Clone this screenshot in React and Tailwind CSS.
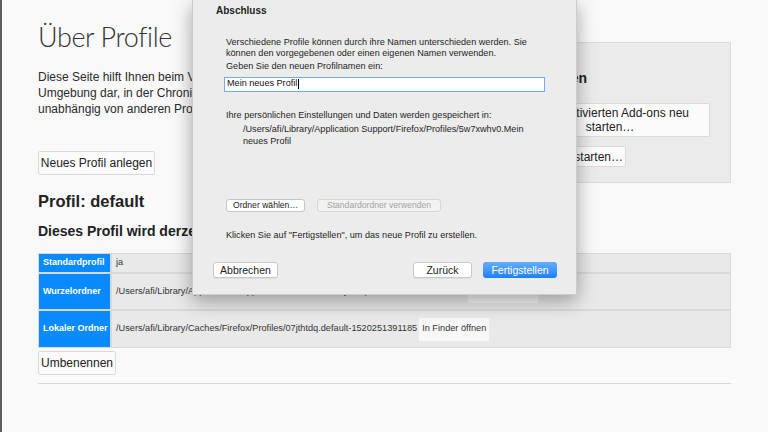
import React from 'react';

function PageButton({ children, className = '' }) {
    return (
        <button className={`rounded-[2px] border border-[#dadada] bg-[#fbfbfb] text-[#222] ${className}`}>
            {children}
        </button>
    );
}

function Row({ label, children, h }) {
    return (
        <>
            <div className={`flex items-center bg-[#0a8aff] pl-[4px] text-[9px] font-bold text-white ${h}`}>
                {label}
            </div>
            <div className={`flex items-center bg-[#e9e9e9] pl-[4px] text-[9.2px] text-[#333] whitespace-nowrap overflow-hidden ${h}`}>
                {children}
            </div>
        </>
    );
}

function FinderButton() {
    return (
        <button className="ml-[2px] h-[23px] shrink-0 rounded-[1px] bg-[#f8f8f8] px-[3px] text-[9.2px] text-[#333]">
            In Finder öffnen
        </button>
    );
}

function WizardDialog() {
    return (
        <div className="absolute left-[190px] top-0 h-[295px] w-[385px] border-x border-b border-[#cdcdcd] bg-[#ececec] text-[#1e1e1e] shadow-[0_6px_18px_rgba(0,0,0,0.35)]">
            <div className="pl-[23px] pt-[5px] text-[10px] font-bold leading-[12px]">Abschluss</div>

            <div className="pl-[33px] pr-[20px] text-[9.1px] leading-[10.5px]">
                <p className="mt-[20px]">
                    Verschiedene Profile können durch ihre Namen unterschieden werden. Sie
                    <br />
                    können den vorgegebenen oder einen eigenen Namen verwenden.
                </p>
                <p className="mt-[3px]">Geben Sie den neuen Profilnamen ein:</p>
            </div>

            <div className="ml-[31px] mt-[5px] flex h-[15px] w-[321px] items-center border-[1.5px] border-[#74a9ee] bg-white pl-[2px] text-[9.1px] text-[#111]">
                Mein neues Profil
                <span className="ml-[1px] inline-block h-[10px] w-px bg-black" />
            </div>

            <div className="pl-[33px] text-[9.1px]">
                <p className="mt-[18px] leading-[10.5px]">Ihre persönlichen Einstellungen und Daten werden gespeichert in:</p>
                <p className="ml-[17px] mt-[3px] leading-[12px]">
                    /Users/afi/Library/Application Support/Firefox/Profiles/5w7xwhv0.Mein
                    <br />
                    neues Profil
                </p>

                <div className="mt-[52px] flex gap-[12px]">
                    <button className="h-[13px] w-[79px] rounded-[3px] border border-[#c6c6c6] bg-white text-[8.6px] leading-[11px] text-[#222]">
                        Ordner wählen…
                    </button>
                    <button className="h-[13px] w-[124px] rounded-[3px] border border-[#d6d6d6] bg-[#f2f2f2] text-[8.6px] leading-[11px] text-[#a3a3a3]">
                        Standardordner verwenden
                    </button>
                </div>

                <p className="mt-[18px] leading-[10px]">
                    Klicken Sie auf "Fertigstellen", um das neue Profil zu erstellen.
                </p>
            </div>

            <div className="mt-[22px] flex items-center pl-[20px] pr-[19px] text-[10.5px]">
                <button className="h-[16px] w-[65px] rounded-[3px] border border-[#c8c8c8] bg-white leading-[14px] text-[#222] shadow-[0_1px_0_rgba(0,0,0,0.06)]">
                    Abbrechen
                </button>
                <div className="flex-1" />
                <button className="h-[16px] w-[59px] rounded-[3px] border border-[#c8c8c8] bg-white leading-[14px] text-[#222] shadow-[0_1px_0_rgba(0,0,0,0.06)]">
                    Zurück
                </button>
                <button className="ml-[11px] h-[16px] w-[74px] rounded-[3px] bg-gradient-to-b from-[#62aefd] to-[#1c80f7] leading-[16px] font-medium text-white">
                    Fertigstellen
                </button>
            </div>
        </div>
    );
}

export default function App() {
    return (
        <div className="relative h-[432px] w-[768px] overflow-hidden border-l-2 border-[#5e5e5e] bg-[#f9f9f9] font-['Liberation_Sans',Arial,sans-serif] text-[#2b2b2b]">
            <div className="ml-[36px] w-[693px]">
                <div className="flex">
                    <div className="min-w-0 flex-1 overflow-hidden">
                        <h1 className="pt-[21px] font-['Lato',sans-serif] text-[27px] font-light leading-[32px] tracking-[-0.4px] text-[#333]">
                            Über Profile
                        </h1>
                        <p className="mt-[16px] whitespace-nowrap text-[12px] leading-[16px]">
                            Diese Seite hilft Ihnen beim Verwalten Ihrer Profile. Jedes Profil stellt eine separate
                            <br />
                            Umgebung dar, in der Chronik, Lesezeichen, Einstellungen und Add-ons
                            <br />
                            unabhängig von anderen Profilen gespeichert werden.
                        </p>
                        <PageButton className="mt-[34px] h-[24px] w-[117px] text-[12px]">
                            Neues Profil anlegen
                        </PageButton>
                    </div>

                    <aside className="mt-[42px] h-[141px] w-[237px] shrink-0 border border-[#dadada] bg-[#ebebeb] pl-[15px] pt-[26px]">
                        <h3 className="text-[14px] font-bold leading-[18px] text-[#222]">Neu starten</h3>
                        <PageButton className="mt-[16px] h-[34px] w-[200px] text-[12px] leading-[14px]">
                            Mit deaktivierten Add-ons neu
                            <br />
                            starten…
                        </PageButton>
                        <PageButton className="mt-[8px] block h-[21px] w-[116px] pr-[2px] text-right text-[12px]">
                            Normal starten…
                        </PageButton>
                    </aside>
                </div>

                <h2 className="mt-[8px] text-[16.5px] font-bold leading-[20px] text-[#222]">Profil: default</h2>
                <h3 className="mt-[12px] whitespace-nowrap text-[14px] font-bold leading-[17px] text-[#222]">
                    Dieses Profil wird derzeit verwendet und kann daher nicht gelöscht werden.
                </h3>

                <div className="mt-[13px] grid grid-cols-[71px_1fr] gap-[2px] bg-[#d9d9d9] p-[1px]">
                    <Row label="Standardprofil" h="h-[18px]">ja</Row>
                    <Row label="Wurzelordner" h="h-[35px]">
                        /Users/afi/Library/Application Support/Firefox/Profiles/07jthtdq.default-1520251391185
                        <FinderButton />
                    </Row>
                    <Row label="Lokaler Ordner" h="h-[36px]">
                        /Users/afi/Library/Caches/Firefox/Profiles/07jthtdq.default-1520251391185
                        <FinderButton />
                    </Row>
                </div>

                <PageButton className="mt-[3px] h-[24px] w-[78px] text-[12px]">Umbenennen</PageButton>
                <div className="mt-[8px] border-t border-[#d8d8d8]" />
            </div>

            <WizardDialog />
        </div>
    );
}
